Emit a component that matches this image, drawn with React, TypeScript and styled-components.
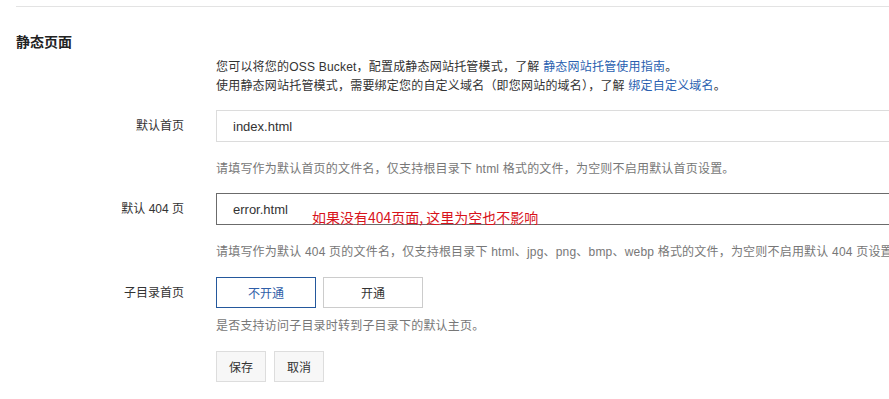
import React, { useState } from "react";
import styled, { createGlobalStyle } from "styled-components";

const GlobalStyle = createGlobalStyle`
  html, body {
    margin: 0;
    padding: 0;
    background: #fff;
    overflow: hidden;
  }
  body {
    font-family: "Liberation Sans", "Noto Sans CJK SC", sans-serif;
    font-size: 12px;
    color: #333;
  }
`;

const StaticPageSettings = () => {
  const [subdir, setSubdir] = useState(false);

  return (
    <Wrapper>
      <Divider />
      <Heading>静态页面</Heading>
      <Row $top={6}>
        <Label />
        <Content>
          <Intro>
            您可以将您的OSS Bucket，配置成静态网站托管模式，了解{" "}
            <Link href="#">静态网站托管使用指南</Link>。
            <br />
            使用静态网站托管模式，需要绑定您的自定义域名（即您网站的域名），了解{" "}
            <Link href="#">绑定自定义域名</Link>。
          </Intro>
        </Content>
      </Row>

      <Row $top={14} $center>
        <Label>默认首页</Label>
        <Content>
          <TextInput defaultValue="index.html" />
        </Content>
      </Row>
      <Row $top={17}>
        <Label />
        <Help>请填写作为默认首页的文件名，仅支持根目录下 html 格式的文件，为空则不启用默认首页设置。</Help>
      </Row>

      <Row $top={14} $center>
        <Label>默认 404 页</Label>
        <Content>
          <InputWrap>
            <TextInput $focused defaultValue="error.html" />
            <Note>如果没有404页面, 这里为空也不影响</Note>
          </InputWrap>
        </Content>
      </Row>
      <Row $top={17}>
        <Label />
        <Help>
          请填写作为默认 404 页的文件名，仅支持根目录下 html、jpg、png、bmp、webp 格式的文件，为空则不启用默认 404 页设置。
        </Help>
      </Row>

      <Row $top={15} $center>
        <Label>子目录首页</Label>
        <Content>
          <Toggle>
            <ToggleButton $active={!subdir} onClick={() => setSubdir(false)}>
              不开通
            </ToggleButton>
            <ToggleButton $active={subdir} onClick={() => setSubdir(true)}>
              开通
            </ToggleButton>
          </Toggle>
        </Content>
      </Row>
      <Row $top={8}>
        <Label />
        <Help>是否支持访问子目录时转到子目录下的默认主页。</Help>
      </Row>

      <Row $top={15}>
        <Label />
        <Actions>
          <Button>保存</Button>
          <Button>取消</Button>
        </Actions>
      </Row>
    </Wrapper>
  );
};

const Wrapper = styled.div`
  padding: 6px 0 0 16px;
  width: 873px;
`;

const Divider = styled.div`
  height: 1px;
  background: #e3e3e3;
`;

const Heading = styled.h3`
  margin: 25px 0 0;
  font-size: 14px;
  line-height: 20px;
  font-weight: bold;
  color: #222;
`;

const Row = styled.div<{ $top: number; $center?: boolean }>`
  display: grid;
  grid-template-columns: 168px 1fr;
  column-gap: 32px;
  align-items: ${(p) => (p.$center ? "center" : "start")};
  margin-top: ${(p) => p.$top}px;
`;

const Label = styled.div`
  text-align: right;
  font-size: 12px;
  line-height: 20px;
  color: #333;
`;

const Content = styled.div`
  min-width: 0;
`;

const Intro = styled.p`
  margin: 0;
  line-height: 19px;
  letter-spacing: 0.2px;
  color: #333;
`;

const Link = styled.a`
  color: #2a5fb0;
  text-decoration: none;
`;

const Help = styled.p`
  margin: 0;
  line-height: 20px;
  letter-spacing: 0.2px;
  color: #777;
  white-space: nowrap;
  overflow: hidden;
`;

const InputWrap = styled.div`
  position: relative;
`;

const TextInput = styled.input<{ $focused?: boolean }>`
  box-sizing: border-box;
  display: block;
  width: calc(100% + 20px);
  height: 32px;
  padding: 0 16px;
  border: 1px solid ${(p) => (p.$focused ? "#6b6b6b" : "#dcdcdc")};
  border-radius: 0;
  outline: none;
  font-family: "Liberation Sans", "Noto Sans CJK SC", sans-serif;
  font-size: 13px;
  color: #333;
  background: #fff;
`;

const Note = styled.span`
  position: absolute;
  left: 96px;
  top: 14px;
  font-family: "Noto Sans CJK SC", sans-serif;
  font-size: 14px;
  line-height: 20px;
  color: #d8131b;
  pointer-events: none;
`;

const Toggle = styled.div`
  display: flex;
  gap: 7px;
`;

const ToggleButton = styled.button<{ $active: boolean }>`
  box-sizing: border-box;
  width: 100px;
  height: 31px;
  padding: 0;
  background: #fff;
  border: 1px solid ${(p) => (p.$active ? "#24589c" : "#cccccc")};
  border-radius: 0;
  font-family: "Liberation Sans", "Noto Sans CJK SC", sans-serif;
  font-size: 12px;
  color: ${(p) => (p.$active ? "#2f5ea8" : "#333")};
  cursor: pointer;
`;

const Actions = styled.div`
  display: flex;
  gap: 8px;
`;

const Button = styled.button`
  box-sizing: border-box;
  width: 50px;
  height: 31px;
  padding: 0;
  background: #f7f7f7;
  border: 1px solid #dddddd;
  border-radius: 0;
  font-family: "Liberation Sans", "Noto Sans CJK SC", sans-serif;
  font-size: 12px;
  color: #333;
  cursor: pointer;
`;

export default function App() {
  return (
    <>
      <GlobalStyle />
      <StaticPageSettings />
    </>
  );
}
